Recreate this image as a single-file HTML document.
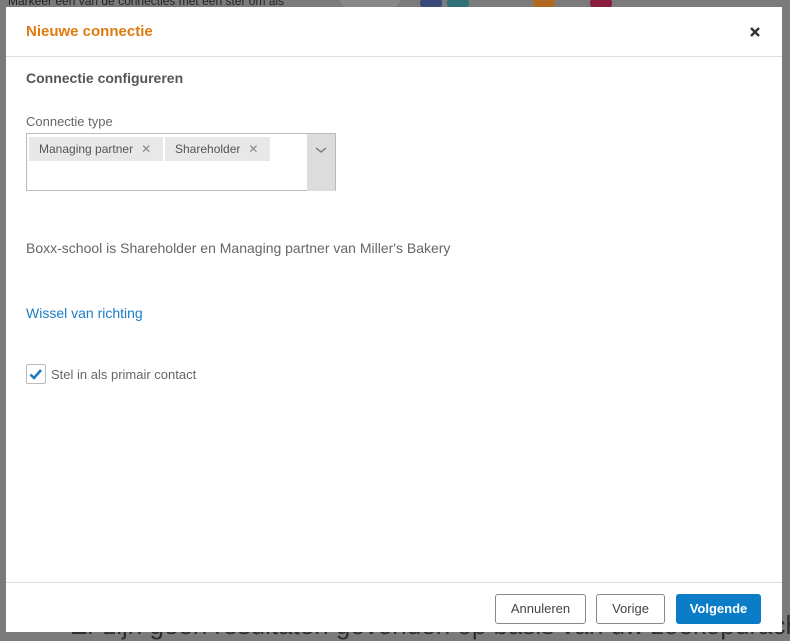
<!DOCTYPE html>
<html><head><meta charset="utf-8">
<style>
*{box-sizing:border-box;margin:0;padding:0}
html,body{width:790px;height:641px;overflow:hidden}
body{background:#7b7b7b;font-family:"Liberation Sans",Arial,sans-serif;position:relative}
.bgtxt{position:absolute;white-space:nowrap}
.modal{position:absolute;left:6px;top:7px;width:776px;height:625px;background:#fff}
.hdr{height:50px;border-bottom:1px solid #ddd;position:relative}
.hdr h1{position:absolute;left:20px;top:16px;font-size:15px;font-weight:bold;color:#e07a10}
.sub{position:absolute;left:20px;top:63px;font-size:14px;font-weight:bold;color:#555}
.lbl{position:absolute;left:20px;top:107px;font-size:13px;color:#666}
.sel{position:absolute;left:20px;top:126px;width:310px;height:58px;border:1px solid #bbb;background:#fff}
.dd{position:absolute;right:0;top:0;width:28px;height:57px;background:#dcdcdc;}
.tag{position:absolute;top:3px;height:24px;background:#e8e8e8;font-size:12px;color:#555;line-height:24px;padding-left:10px;white-space:nowrap}
.tag span{color:#888;margin-left:8px}
.desc{position:absolute;left:20px;top:233px;font-size:14px;color:#666;white-space:nowrap}
.link{position:absolute;left:20px;top:298px;font-size:14px;color:#1a7dc4}
.cb{position:absolute;left:20px;top:357px;width:20px;height:20px;border:1px solid #bbb;border-radius:2px}
.cbl{position:absolute;left:45px;top:360px;font-size:13px;color:#666;white-space:nowrap}
.ftr{position:absolute;left:0;top:575px;width:776px;border-top:1px solid #ddd;height:50px}
.btn{position:absolute;top:11px;height:30px;border:1px solid #888;border-radius:3px;font-size:13px;color:#444;line-height:28px;text-align:center;background:#fff}
</style></head><body>
<div class="bgtxt" style="left:8px;top:-6px;font-size:12px;color:#222">Markeer één van de connecties met een ster om als</div>
<div style="position:absolute;left:340px;top:-10px;width:60px;height:18px;border-radius:30px;background:#888"></div>
<div style="position:absolute;left:420px;top:-4px;width:22px;height:14px;border-radius:11px;background:#3a4a78"></div>
<div style="position:absolute;left:447px;top:-4px;width:22px;height:14px;border-radius:11px;background:#2f6f7a"></div>
<div style="position:absolute;left:533px;top:-4px;width:22px;height:14px;border-radius:11px;background:#b06a20"></div>
<div style="position:absolute;left:590px;top:-4px;width:22px;height:14px;border-radius:11px;background:#8a1c3c"></div>
<div class="bgtxt" style="left:70px;top:610px;font-size:26px;color:#2d2d2d">Er zijn geen resultaten gevonden op basis van uw zoekopdracht.</div>
<div class="modal">
 <div class="hdr"><h1>Nieuwe connectie</h1>
  <svg style="position:absolute;left:744px;top:20px" width="10" height="10" viewBox="0 0 10 10"><path d="M1 1l8 8M9 1l-8 8" stroke="#333" stroke-width="2.4"/></svg></div>
 <div class="sub">Connectie configureren</div>
 <div class="lbl">Connectie type</div>
 <div class="sel">
  <div class="tag" style="left:2px;width:134px">Managing partner<span>✕</span></div>
  <div class="tag" style="left:138px;width:105px">Shareholder<span>✕</span></div>
  <div class="dd"><svg width="28" height="30" viewBox="0 0 28 30"><path d="M9 14l5 4 5-4" fill="none" stroke="#777" stroke-width="1.3"/></svg></div>
 </div>
 <div class="desc">Boxx-school is Shareholder en Managing partner van Miller's Bakery</div>
 <div class="link">Wissel van richting</div>
 <div class="cb"><svg width="18" height="18" viewBox="0 0 18 18"><path d="M3.5 9.5l3.5 3.5 7-8" fill="none" stroke="#1a7dc4" stroke-width="2.6"/></svg></div>
 <div class="cbl">Stel in als primair contact</div>
 <div class="ftr">
  <div class="btn" style="left:489px;width:91px">Annuleren</div>
  <div class="btn" style="left:590px;width:69px">Vorige</div>
  <div class="btn" style="left:670px;width:85px;background:#0a7cc8;border-color:#0a7cc8;color:#fff;font-weight:bold">Volgende</div>
 </div>
</div>
</body></html>
